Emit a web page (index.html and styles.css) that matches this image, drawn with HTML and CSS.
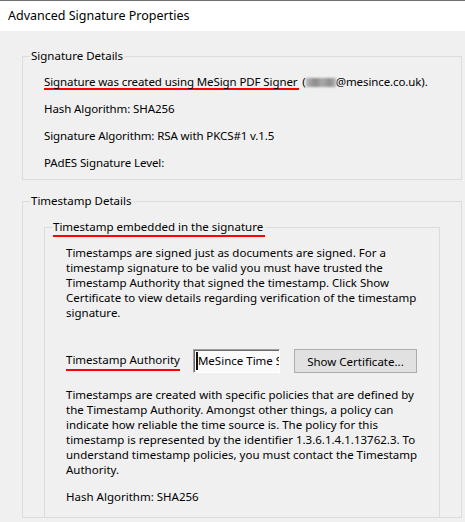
FILE: index.html
```html
<!DOCTYPE html>
<html lang="en">
<head>
    <meta charset="UTF-8">
    <title>Advanced Signature Properties</title>
    <link rel="stylesheet" href="styles.css">
</head>
<body>
    <div class="titlebar">Advanced Signature Properties</div>

    <main class="content">
        <fieldset class="group">
            <legend>Signature Details</legend>
            <div class="rows">
                <p><span class="mark">Signature was created using MeSign PDF Signer</span> (<span class="redacted"></span>@mesince.co.uk).</p>
                <p>Hash Algorithm: SHA256</p>
                <p>Signature Algorithm: RSA with PKCS#1 v.1.5</p>
                <p>PAdES Signature Level:</p>
            </div>
        </fieldset>

        <fieldset class="group timestamp">
            <legend>Timestamp Details</legend>
            <fieldset class="group inner">
                <legend><span class="mark mark-legend">Timestamp embedded in the signature</span></legend>
                <div class="inner-body">
                    <p class="para">Timestamps are signed just as documents are signed. For a<br>
                    timestamp signature to be valid you must have trusted the<br>
                    Timestamp Authority that signed the timestamp. Click Show<br>
                    Certificate to view details regarding verification of the timestamp<br>
                    signature.</p>

                    <div class="authority">
                        <span class="mark mark-label">Timestamp Authority</span>
                        <div class="field"><span class="caret"></span>MeSince Time S</div>
                        <button class="btn">Show Certificate...</button>
                    </div>

                    <p class="para para-policy">Timestamps are created with specific policies that are defined by<br>
                    the Timestamp Authority. Amongst other things, a policy can<br>
                    indicate how reliable the time source is. The policy for this<br>
                    timestamp is represented by the identifier 1.3.6.1.4.1.13762.3. To<br>
                    understand timestamp policies, you must contact the Timestamp<br>
                    Authority.</p>

                    <p class="para para-hash">Hash Algorithm: SHA256</p>
                </div>
            </fieldset>
        </fieldset>
    </main>
</body>
</html>
```

FILE: styles.css
```css
* { margin: 0; padding: 0; box-sizing: border-box; }
body { font-family: "Noto Sans", "Segoe UI", sans-serif; font-size: 11.5px; color: #000; background: #f0f0f0; width: 465px; height: 522px; overflow: hidden; }

.titlebar { background: #fff; border-top: 1px solid #6f6f6f; height: 31px; padding: 0 8px; font-size: 12.5px; line-height: 30px; }

.content { padding: 17px 3px 0 22px; }
.group { border: 1px solid #dcdcdc; min-width: 0; }
.group legend { margin-left: 7px; padding: 0 1px; line-height: 16px; }

.rows { display: flex; flex-direction: column; gap: 11px; padding: 10px 21px 8px; line-height: 16px; white-space: nowrap; letter-spacing: -0.1px; }

.mark { background: linear-gradient(#f00, #f00) no-repeat left bottom / 100% 2px; padding-bottom: 1px; padding-right: 2px; }
.mark-legend { padding-bottom: 3px; }
.mark-label { padding-bottom: 4px; padding-right: 0; }

.redacted { display: inline-block; width: 30px; height: 9px; vertical-align: -1px; background: linear-gradient(90deg, #b4b4b4, #8c8c8c 30%, #a8a8a8 55%, #8e8e8e 80%, #b8b8b8); filter: blur(1px); }

.timestamp { margin-top: 13px; }
.inner { margin: 10px 21px 0; border-bottom: none; }
.inner-body { padding: 10px 0 13px 21px; line-height: 15px; }
.para { white-space: nowrap; }

.authority { display: flex; align-items: center; height: 24px; margin-top: 29px; line-height: 15px; }
.authority .mark { margin-right: 13px; }
.field { position: relative; flex-shrink: 0; width: 87px; height: 24px; padding: 0 0 0 4px; overflow: hidden; white-space: nowrap; line-height: 21px; background: #fbfbfb; border: 1px solid; border-color: #a0a0a0 #fff #fff #a0a0a0; box-shadow: inset 1px 1px 0 #696969; }
.caret { position: absolute; left: 2px; top: 2px; width: 2px; height: 18px; background: #111; }
.btn { flex-shrink: 0; margin-left: 14px; width: 123px; height: 24px; font: inherit; background: #e1e1e1; border: 1px solid #adadad; color: #000; }

.para-policy { margin-top: 14px; }
.para-hash { margin-top: 12px; }
```
